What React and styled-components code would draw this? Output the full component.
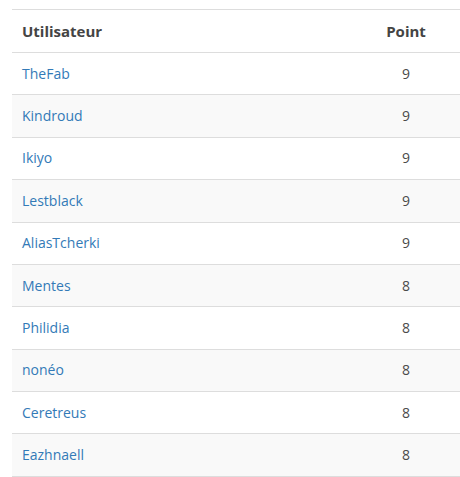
import React from "react"
import styled, { createGlobalStyle } from "styled-components"

const rows = [
  { name: "TheFab", points: 9 },
  { name: "Kindroud", points: 9 },
  { name: "Ikiyo", points: 9 },
  { name: "Lestblack", points: 9 },
  { name: "AliasTcherki", points: 9 },
  { name: "Mentes", points: 8 },
  { name: "Philidia", points: 8 },
  { name: "nonéo", points: 8 },
  { name: "Ceretreus", points: 8 },
  { name: "Eazhnaell", points: 8 },
]

export default () => (
  <Page>
    <GlobalStyle />
    <Table>
      <thead>
        <tr>
          <Th>Utilisateur</Th>
          <Th center>Point</Th>
        </tr>
      </thead>
      <tbody>
        {rows.map((r, i) => (
          <Row key={r.name} striped={i % 2 === 1}>
            <Td>
              <UserLink href="#">{r.name}</UserLink>
            </Td>
            <Td center>{r.points}</Td>
          </Row>
        ))}
      </tbody>
    </Table>
  </Page>
)

const GlobalStyle = createGlobalStyle`
  html, body {
    overflow: hidden;
  }
  body {
    margin: 0;
    background: #fff;
    font-family: "Open Sans", "Noto Sans", sans-serif;
    font-size: 14px;
    color: #4a4a4a;
  }
`

const Page = styled.div`
  padding: 9px 0 0 12px;
`

const Table = styled.table`
  width: 100%;
  border-collapse: collapse;
  border-top: 1px solid #ddd;
`

const Th = styled.th`
  padding: 11px 10px;
  line-height: 20px;
  font-size: 15px;
  font-weight: bold;
  text-align: ${(p) => (p.center ? "center" : "left")};
  width: ${(p) => (p.center ? "88px" : "auto")};
  border-bottom: 1px solid #ddd;
  color: #444;
`

const Row = styled.tr`
  background: ${(p) => (p.striped ? "#f9f9f9" : "#fff")};
`

const Td = styled.td`
  padding: 10.7px 10px;
  line-height: 20px;
  text-align: ${(p) => (p.center ? "center" : "left")};
  border-bottom: 1px solid #ddd;
`

const UserLink = styled.a`
  color: #337ab7;
  text-decoration: none;
`
